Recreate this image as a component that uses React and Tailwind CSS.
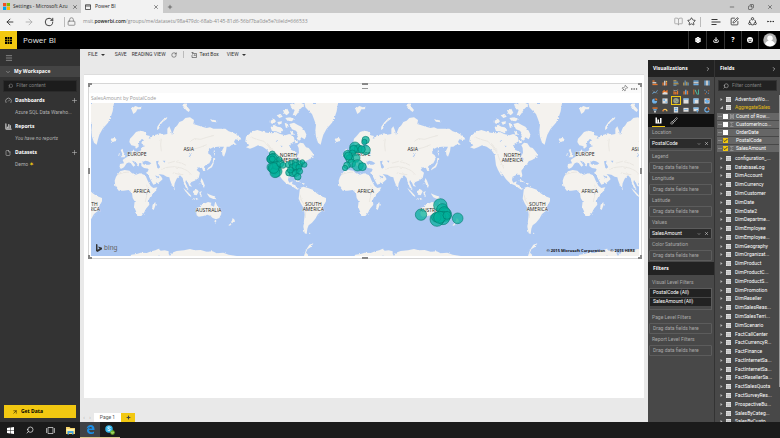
import React from "react";
import {
  ArrowLeft, ArrowRight, RotateCw, Lock, BookOpen, Star, SquarePen, Ellipsis, X, Plus, Minus, Copy,
  Settings, Download, Smile, Menu, ChevronDown, ChevronRight, Search, Gauge, ChartColumn, File,
  ArrowUpRight, Pin, Brush, Check,
} from "lucide-react";

const EURASIA =
  "M148 192L150 182L158 174L168 162L180 158L190 160L198 164L200 172L210 174L206 182L214 180L218 172L228 170L240 166L250 170L262 168L262 152L268 145L274 160L276 172L280 160L284 150L292 142L298 132L308 128L316 120L330 118L342 126L340 138L352 142L366 146L380 150L390 148L400 152L420 152L436 152L446 160L460 164L478 174L484 184L476 186L466 184L462 192L470 200L456 200L448 206L440 206L438 220L432 236L427 230L426 218L432 206L414 206L400 208L388 214L384 226L392 232L396 240L388 256L378 260L372 266L376 278L370 280L366 270L356 268L350 276L360 284L356 300L344 308L334 312L330 318L336 326L328 324L324 314L318 306L316 312L322 326L328 338L320 334L312 318L308 300L300 292L290 302L284 316L282 330L276 322L270 306L268 298L260 296L250 290L236 288L244 296L248 304L236 314L220 320L212 306L204 290L198 284L204 280L206 272L192 270L184 264L184 256L178 254L176 266L170 256L162 250L156 248L166 262L160 266L150 252L140 256L132 268L124 272L118 270L120 258L132 256L128 246L136 240L146 234L150 228L156 224L160 214L164 220L172 222L182 218L186 208L196 204L188 202L184 194L190 184L184 184L176 196L176 206L168 212L164 204L154 202Z";
const AFRICA =
  "M120 280L134 276L148 278L156 286L168 290L180 286L196 292L204 310L212 324L220 330L232 328L226 340L212 354L206 366L208 380L198 392L192 404L184 414L172 414L168 400L162 386L164 370L158 360L156 346L146 336L130 338L116 338L106 324L104 308L108 296Z";
const AUSTRALIA =
  "M348 398L350 390L360 386L368 378L376 376L384 372L394 374L392 382L402 386L406 370L412 384L422 396L424 408L418 420L408 424L398 420L392 414L382 410L370 414L356 416L350 412Z";
const EAST_ISLANDS = [
  "M122 216L128 212L130 222L136 232L134 238L122 238L128 230Z",
  "M117 226L122 228L120 234L115 234Z",
  "M92 184L102 180L109 184L106 190L96 191Z",
  "M154 92L166 84L176 88L186 86L182 94L172 94L168 102L160 108Z",
  "M231 156L232 146L240 134L250 124L262 117L260 123L248 132L240 142L237 152Z",
  "M306 80L316 76L322 86L330 96L326 102L318 96L312 88Z",
  "M390 124L402 126L412 128L410 133L396 131Z",
  "M402 214L405 222L404 234L401 226Z",
  "M400 240L406 240L402 247L401 256L396 268L388 272L380 278L384 270L392 264L398 254Z",
  "M364 300L369 308L374 322L372 330L367 322L362 310Z",
  "M338 340L350 334L356 340L350 352L342 350Z",
  "M310 330L320 338L332 352L334 358L326 352L316 340Z",
  "M334 360L346 362L356 364L346 366Z",
  "M358 342L366 340L362 346L366 354L360 352Z",
  "M380 346L390 350L400 354L410 364L398 362L388 358Z",
  "M402 428L410 428L406 434Z",
  "M458 420L465 427L458 434L450 443L445 442L454 434Z",
  "M226 372L227 380L221 396L216 392L218 380Z",
  "M356 318L362 316L358 322Z",
  "M281 330L285 332L283 337Z",
];
const INLAND_WATER = [
  "M188 252L196 248L204 250L214 256L208 260L194 260L188 258Z",
  "M228 250L236 248L234 256L240 266L238 272L232 270L230 260Z",
  "M248 248L256 248L254 254Z",
  "M198 290L203 292L214 314L210 316Z",
  "M226 292L238 298L236 301L228 297Z",
  "M326 236L334 226L336 228L328 238Z",
  "M196 344L201 344L200 350L196 350Z",
];
const RELIEF = [
  "M244 274L262 268L282 266L304 270L322 278L334 290",
  "M262 256L284 250L306 256L318 262",
  "M276 284L294 288L310 290",
  "M320 220L338 214L360 208L380 200",
  "M330 190L344 182L362 184L380 178L404 172",
  "M244 180L242 200L244 220",
  "M200 320L204 336L200 352L196 372",
  "M112 290L130 284L146 282",
];
const NORTH_AMERICA =
  "M58 190L60 176L70 168L82 160L94 156L106 160L122 164L140 166L150 162L162 168L178 172L190 168L204 178L206 190L196 196L190 208L196 216L210 222L214 234L219 224L218 210L214 202L222 194L232 196L240 208L248 210L256 220L262 228L256 234L264 238L252 242L246 246L236 250L230 260L222 268L214 278L217 292L214 299L209 290L200 290L188 296L186 306L190 314L200 310L198 318L208 322L212 330L220 332L214 335L206 330L194 322L180 316L168 304L160 292L150 278L158 296L152 290L144 276L138 262L136 246L134 230L124 216L110 206L96 202L84 208L72 212L60 208L70 202Z";
const SOUTH_AMERICA =
  "M222 330L232 326L246 330L262 336L272 346L284 354L300 360L300 370L292 384L288 398L276 408L268 422L258 434L248 442L244 452L242 468L236 466L232 446L234 428L236 410L234 392L224 376L218 362L220 346Z";
const GREENLAND =
  "M236 75L336 75L332 100L326 118L318 134L302 152L292 170L288 184L284 200L276 194L270 176L268 158L270 140L264 124L258 108L248 98L238 88Z";
const WEST_ISLANDS = [
  "M134 148L144 140L154 146L164 148L172 156L164 166L150 160L138 160Z",
  "M134 128L144 122L150 130L142 138L135 136Z",
  "M152 112L164 108L170 116L160 120Z",
  "M154 132L168 130L166 138L158 140Z",
  "M172 98L184 92L190 104L182 112L174 106Z",
  "M178 120L192 118L204 122L198 130L184 128Z",
  "M176 136L184 134L188 146L180 150Z",
  "M192 78L208 75L226 75L236 80L222 94L212 110L200 112L206 96L196 90Z",
  "M190 138L204 134L214 140L226 146L236 158L242 172L236 184L226 178L220 188L212 182L218 170L210 158L198 154Z",
  "M192 158L200 162L204 170L196 170Z",
  "M206 186L214 186L216 194L208 196Z",
  "M328 184L338 180L343 184L340 190L331 191Z",
  "M256 226L264 228L263 234L256 232Z",
  "M204 307L214 307L226 314L216 312Z",
  "M228 315L236 316L234 320L228 319Z",
  "M250 500L262 496L256 506L244 514L240 524L250 534L234 534L240 516Z",
  "M246 464L254 466L250 468Z",
];
const ANTARCTICA =
  "M150 536L154 530L170 528L182 524L200 525L214 520L226 517L236 512L242 518L254 517L266 520L266 528L270 534L276 524L290 519L312 517L330 513L344 517L362 516L380 521L398 520L410 526L430 524L446 530L470 534L520 536Z";

const BUBBLES = [
  [22, 228, 9], [18, 243, 13], [26, 242, 16], [22, 243, 15], [22, 243, 9], [20, 268, 14], [30, 272, 17], [34, 280, 17],
  [30, 284, 15], [34, 262, 12], [26, 270, 16], [46, 256, 11], [43, 244, 8], [54, 262, 9], [70, 260, 9], [80, 256, 9],
  [92, 254, 10], [104, 258, 10], [118, 260, 8], [112, 252, 7], [72, 284, 10], [84, 284, 12], [96, 272, 12],
  [82, 268, 10], [92, 264, 11], [102, 268, 9], [92, 286, 10], [76, 276, 9],
  [104, 280, 9], [98, 296, 10], [302, 186, 11], [298, 192, 8], [270, 208, 16], [280, 212, 12],
  [302, 216, 14], [290, 214, 11], [266, 214, 12], [248, 230, 13], [262, 226, 10], [272, 240, 13], [254, 242, 12],
  [250, 234, 12], [260, 256, 12], [246, 262, 10], [240, 270, 8], [278, 262, 17], [292, 266, 12], [468, 410, 17],
  [526, 382, 20], [532, 394, 17], [540, 410, 20], [538, 404, 18], [534, 420, 20], [516, 424, 21], [514, 418, 14],
  [524, 418, 18], [546, 412, 12], [578, 421, 16],
];

const PLACES = [
  ["EUROPE", 171, 234], ["ASIA", 326, 218], ["AFRICA", 185, 344], ["AUSTRALIA", 386, 402],
  ["SOUTH", 700, 384], ["AMERICA", 700, 400], ["NORTH", 625, 237], ["AMERICA", 625, 252],
];

function WorldMap() {
  return (
    <svg className="block h-[153px] w-full bg-[#abc7f2]" viewBox="33 75 1644 459" preserveAspectRatio="xMidYMid slice" role="img" aria-label="SalesAmount by PostalCode">
      <defs>
        <filter id="coast" x="-5%" y="-5%" width="110%" height="110%">
          <feTurbulence type="fractalNoise" baseFrequency="0.12" numOctaves="2" seed="4" />
          <feDisplacementMap in="SourceGraphic" scale="7" xChannelSelector="R" yChannelSelector="G" />
        </filter>
        <g id="world" filter="url(#coast)">
          <g fill="#f4f2ee">
            <path d={EURASIA} /><path d={AFRICA} /><path d={AUSTRALIA} /><path d={ANTARCTICA} />
            {EAST_ISLANDS.map((d) => <path key={d} d={d} />)}
            <g transform="translate(438 0)">
              <path d={NORTH_AMERICA} /><path d={SOUTH_AMERICA} /><path d={GREENLAND} />
              {WEST_ISLANDS.map((d) => <path key={d} d={d} />)}
            </g>
          </g>
          <g fill="#abc7f2">{INLAND_WATER.map((d) => <path key={d} d={d} />)}</g>
          <g fill="none" stroke="#e4e1db" strokeWidth="2">
            {RELIEF.map((d) => <path key={d} d={d} />)}
            <path d="M510 176L530 184L552 190L566 206L580 226L588 248L600 272M562 196L580 220M660 350L664 366L678 390L676 420" />
          </g>
          <path fill="#abc7f2" d="M644 240L654 238L660 244L650 246ZM586 188L592 186L590 192ZM602 202L608 204L604 208Z" />
        </g>
      </defs>
      {[-672, 0, 672, 1344].map((x) => (
        <g key={x} transform={`translate(${x} 0)`}>
          <use href="#world" />
          {PLACES.map(([name, px, py]) => (
            <text key={name + py} x={px} y={py} textAnchor="middle" fontSize="15" fill="#222" stroke="#f4f2ee" strokeWidth="2" paintOrder="stroke" fontFamily="Open Sans, sans-serif" fontWeight="500">{name}</text>
          ))}
        </g>
      ))}
      <g transform="translate(555 0)" fill="#01b09a" fillOpacity="0.72" stroke="#01796b" strokeWidth="1.8">
        {BUBBLES.map(([x, y, r], i) => <circle key={i} cx={x} cy={y} r={r} />)}
      </g>
    </svg>
  );
}

function BrowserChrome() {
  return (
    <>
      <div className="flex h-[13px] shrink-0 items-stretch bg-[#cacaca] font-['Open_Sans',sans-serif] text-[5px] text-[#222]">
        <div className="flex w-[81px] items-center gap-[3px] bg-[#d0d0d0] px-[3px]">
          <svg className="size-[7px] shrink-0" viewBox="0 0 14 14" aria-hidden="true">
            <path fill="#f25022" d="M0 0h6.5v6.5H0z" /><path fill="#7fba00" d="M7.500 0H14v6.500H7.500z" />
            <path fill="#00a4ef" d="M0 7.500h6.500V14H0z" /><path fill="#ffb900" d="M7.500 7.500H14V14H7.500z" />
          </svg>
          <span className="flex-1 whitespace-nowrap">Settings - Microsoft Azu</span>
          <button aria-label="Close tab"><X size={6} /></button>
        </div>
        <div className="flex w-[82px] items-center gap-1 bg-[#f2f2f2] px-1">
          <svg className="size-[6px]" viewBox="0 0 12 12" fill="none" stroke="#333" aria-hidden="true"><path d="M1 1.500h10v9.500H1zM1 4h10" strokeWidth="1.500" /></svg>
          <span className="flex-1">Power BI</span>
          <button aria-label="Close tab"><X size={6} /></button>
        </div>
        <button className="px-1" aria-label="New tab"><Plus size={6} /></button>
        <div className="ml-auto flex items-center gap-[13px] pr-[7px]">
          <button aria-label="Minimise"><Minus size={6} /></button>
          <button aria-label="Restore"><Copy size={6} className="-scale-x-100" /></button>
          <button aria-label="Close"><X size={6} /></button>
        </div>
      </div>
      <div className="flex h-[18px] shrink-0 items-center border-b border-white bg-[#f2f2f2] px-[5px] font-['Open_Sans',sans-serif] text-[5px] text-[#222]">
        <button aria-label="Back"><ArrowLeft size={10} strokeWidth={2} /></button>
        <button className="ml-[9px] text-[#aaa]" aria-label="Forward"><ArrowRight size={10} strokeWidth={2} /></button>
        <button className="ml-[10px]" aria-label="Refresh"><RotateCw size={10} strokeWidth={2} /></button>
        <span className="ml-[10px] h-[10px] w-px bg-[#bbb]" />
        <Lock className="ml-[2px] text-[#777]" size={9} />
        <span className="ml-[7px] flex-1 whitespace-nowrap text-[#8a8a8a]">
          msit.<b className="font-semibold text-[#222]">powerbi.com</b>/groups/me/datasets/98a479dc-68ab-4145-81d6-56bf7ba0de5e?tileId=666533
        </span>
        <button className="text-[#999]" aria-label="Reading view"><BookOpen size={9} /></button>
        <button className="ml-1" aria-label="Favourite"><Star size={9} strokeWidth={2} /></button>
        <span className="ml-1 h-[10px] w-px bg-[#bbb]" />
        <button className="ml-[10px]" aria-label="Hub">
          <svg className="h-[8px] w-[10px]" viewBox="0 0 20 16" fill="none" stroke="currentColor" strokeWidth="1.800"><path d="M1 3h12M1 8h18M1 13h10" /></svg>
        </button>
        <button className="ml-[9px]" aria-label="Web note"><SquarePen size={9} /></button>
        <button className="ml-[9px]" aria-label="Share">
          <svg className="size-[9px]" viewBox="0 0 18 18" fill="none" stroke="currentColor" strokeWidth="1.600"><path d="M5 5.500A6 6 0 0 0 3 11M13 5.500A6 6 0 0 1 15 11M6 15a6 6 0 0 0 6 0" /><circle cx="9" cy="3.500" r="2.300" /><circle cx="3.500" cy="13" r="2.200" /><circle cx="14.500" cy="13" r="2.200" /></svg>
        </button>
        <button className="ml-[9px]" aria-label="More"><Ellipsis size={9} /></button>
      </div>
    </>
  );
}

function AppHeader() {
  return (
    <header className="flex h-[18px] shrink-0 items-stretch bg-black font-['Open_Sans',sans-serif] text-white">
      <button className="flex w-[17px] items-center justify-center bg-[#f2c811]" aria-label="App launcher">
        <svg className="size-[7px]" viewBox="0 0 14 14" aria-hidden="true">
          {[0, 5, 10].map((y) => [0, 5, 10].map((x) => <rect key={`${x}${y}`} x={x} y={y} width="4" height="4" fill="#000" />))}
        </svg>
      </button>
      <h1 className="ml-[6px] flex-1 text-[8px] leading-[18px] text-[#e8e8e8]">Power BI</h1>
      <button className="w-[18px] border-l border-[#333] pl-[6px]" aria-label="Settings"><Settings size={6} strokeWidth={5} /></button>
      <button className="w-[18px] border-l border-[#333] pl-[6px]" aria-label="Download"><Download size={6} strokeWidth={4} /></button>
      <button className="w-[17px] border-l border-[#333] text-[7px] font-bold leading-[16px]" aria-label="Help">?</button>
      <button className="w-[17px] border-l border-[#333] pl-[5px]" aria-label="Feedback">
        <svg className="size-[6px]" viewBox="0 0 12 12" aria-hidden="true"><circle cx="6" cy="6" r="6" fill="#fff" /><path d="M3 4h2v1.500H3zM7 4h2v1.500H7zM2.500 7.500h7C8.500 10 3.500 10 2.500 7.500z" fill="#000" /></svg>
      </button>
      <button className="flex w-[22px] items-center justify-center border-l border-[#333]" aria-label="Account">
        <svg className="size-[14px]" viewBox="0 0 28 28"><circle cx="14" cy="14" r="13.500" fill="#b4b4b4" /><circle cx="14" cy="10.500" r="5.500" fill="#fff" /><path d="M4 22c2-6 6-7 10-7s8 1 10 7a13 13 0 0 1-20 0z" fill="#fff" /></svg>
      </button>
    </header>
  );
}

function NavGroup({ icon, title, add, children }) {
  return (
    <section>
      <div className="flex h-[11px] items-center font-['Open_Sans',sans-serif]">
        <span className="w-[10px] text-[#ccc]">{icon}</span>
        <h2 className="flex-1 font-bold text-white">{title}</h2>
        {add && <button className="text-[#bbb]" aria-label={`Add ${title}`}><Plus size={7} /></button>}
      </div>
      <div className="mb-[3px] h-[12px] whitespace-nowrap pl-[10px] leading-[12px] text-[#b0b0b0]">{children}</div>
    </section>
  );
}

function Sidebar() {
  return (
    <nav className="flex w-[80px] shrink-0 flex-col bg-[#333] text-[5px] text-white">
      <button className="flex h-[17px] items-center pl-[5px] text-[#aaa]" aria-label="Menu"><Menu size={8} /></button>
      <button className="flex h-[11px] items-center gap-[3px] bg-[#444] pl-[5px] font-['Open_Sans',sans-serif] font-bold"><ChevronDown size={6} className="text-[#bbb]" />My Workspace</button>
      <label className="mx-[3px] mt-[3px] flex h-[12px] items-center gap-[3px] border border-[#2a2a2a] bg-[#1c1c1c] pl-1">
        <Search size={6} className="-scale-x-100 text-[#aaa]" />
        <input className="w-full min-w-0 bg-transparent outline-none placeholder:text-[#808080]" placeholder="Filter content" aria-label="Filter content" />
      </label>
      <div className="flex-1 pl-[5px] pr-[2px] pt-[3px]">
        <NavGroup icon={<Gauge size={7} />} title="Dashboards" add><a href="#dashboard">Azure SQL Data Wareho...</a></NavGroup>
        <NavGroup icon={<ChartColumn size={7} strokeWidth={4} />} title="Reports"><em>You have no reports</em></NavGroup>
        <NavGroup icon={<File size={6} />} title="Datasets" add><a href="#demo">Demo <span className="text-[6px] text-[#f2c811]">✶</span></a></NavGroup>
      </div>
      <button className="mx-1 mb-1 flex h-[13px] items-center gap-[3px] bg-[#f2c811] pl-2 font-['Open_Sans',sans-serif] font-bold text-black"><ArrowUpRight size={6} />Get Data</button>
    </nav>
  );
}

function Corner({ place }) {
  return <span className={`absolute size-1 border-[#888] ${place}`} />;
}

function ReportCanvas() {
  return (
    <main className="flex min-w-0 flex-1 flex-col bg-[#e9e9e9]">
      <div className="flex h-[11px] shrink-0 items-center pl-[8px] text-[5px] text-[#333]">
        <button className="flex items-center gap-[3px]">FILE <span className="border-x-2 border-t-2 border-x-transparent border-t-[#333]" /></button>
        <button className="ml-[10px]">SAVE</button>
        <button className="ml-[5px]">READING VIEW</button>
        <button className="ml-[5px]" aria-label="Refresh"><RotateCw size={6} /></button>
        <span className="ml-[6px] h-[7px] w-px bg-[#bbb]" />
        <button className="ml-[7px] flex items-center gap-[3px]">
          <svg className="size-[6px]" viewBox="0 0 12 12" fill="none" stroke="#444" strokeWidth="1.200" aria-hidden="true"><path d="M4 3h7v8H2V6M1 1h4M3 1v4M6 8l1.500-3L9 8" /></svg>Text Box
        </button>
        <button className="ml-[8px] flex items-center gap-[3px]">VIEW <span className="border-x-2 border-t-2 border-x-transparent border-t-[#333]" /></button>
      </div>
      <div className="mx-1 mt-[14px] flex flex-1 flex-col border-t border-[#ddd] bg-white pl-1 pr-[2px] pt-2">
        <section className="relative border border-[#d6d6d6] bg-white">
          <Corner place="-left-px -top-px border-l-2 border-t-2" />
          <Corner place="-right-px -top-px border-r-2 border-t-2" />
          <Corner place="-left-px -bottom-px border-l-2 border-b-2" />
          <Corner place="-right-px -bottom-px border-r-2 border-b-2" />
          <span className="absolute -top-px left-1/2 h-[2px] w-[6px] -translate-x-1/2 bg-[#888]" />
          <span className="absolute left-1/2 top-[3px] h-[2px] w-[6px] -translate-x-1/2 border-b border-[#999]" />
          <span className="absolute -bottom-px left-1/2 h-[2px] w-[6px] -translate-x-1/2 bg-[#888]" />
          <span className="absolute -left-px top-1/2 h-[6px] w-[2px] -translate-y-1/2 bg-[#888]" />
          <span className="absolute -right-px top-1/2 h-[6px] w-[2px] -translate-y-1/2 bg-[#888]" />
          <div className="flex h-[9px] items-center justify-end gap-[2px] bg-[#fafafa] pr-[3px] text-[#555]">
            <button aria-label="Pin visual"><Pin size={7} className="rotate-45" /></button>
            <button aria-label="More options"><Ellipsis size={8} /></button>
          </div>
          <h2 className="h-[10px] pl-[2px] font-['Open_Sans',sans-serif] text-[5px] leading-[11px] text-[#999]">SalesAmount by PostalCode</h2>
          <div className="relative mx-[2px] mb-[2px]">
            <WorldMap />
            <span className="absolute bottom-[3px] left-[5px] flex items-center gap-[2px] text-[7px] leading-[10px] text-[#666]">
              <svg className="h-[8px] w-[6px]" viewBox="0 0 12 16" aria-hidden="true"><path fill="#333" d="M0 0l3 1v10.500L7.500 9 5.500 8 4.500 5 12 7.700v3L3 16l-3-2z" /></svg>bing
            </span>
            <span className="absolute bottom-[1px] right-[4px] flex gap-[5px] whitespace-nowrap font-['Open_Sans',sans-serif] text-[4px] font-bold leading-[8px] text-[#111]"><span>© 2015 Microsoft Corporation</span><span>© 2015 HERE</span></span>
          </div>
        </section>
      </div>
      <div className="mt-[15px] flex h-[9px] shrink-0 items-stretch text-[5px]">
        <div className="flex w-[14px] items-center justify-around px-px text-[#aaa]"><button aria-label="Previous page">‹</button><button aria-label="Next page">›</button></div>
        <button className="w-[27px] bg-white text-[#555]">Page 1</button>
        <button className="flex w-[14px] items-center justify-center bg-[#f2c811] text-[#444]" aria-label="Add page"><Plus size={5} strokeWidth={5} /></button>
      </div>
    </main>
  );
}

const O = "#e8772e", B = "#6fb1e8", W = "#dedede", Y = "#f0c35a";
const VISUALS = [
  ["Stacked bar", [[O, "M1 1h5v3H1z"], [W, "M1 5h9v3H1z"], [O, "M1 9h12v3H1z"]]],
  ["Stacked column", [[O, "M1 6h3v7H1zM9 5h3v8H9z"], [W, "M5 2h3v11H5z"], [Y, "M9 2h3v3H9z"]]],
  ["Clustered bar", [[Y, "M1 1h7v2H1z"], [B, "M1 4h11v2H1z"], [Y, "M1 8h12v2H1z"], [B, "M1 11h7v2H1z"]]],
  ["Clustered column", [[Y, "M1 6h2v7H1zM8 4h2v9H8z"], [B, "M4 1h2v12H4zM11 6h2v7h-2z"]]],
  ["100% bar", [[B, "M1 1h12v3H1zM1 9h12v3H1z"], [W, "M1 5h12v3H1z"]]],
  ["100% column", [[B, "M1 1h3v12H1zM10 1h3v12h-3z"], [W, "M5 1h4v12H5z"]]],
  ["Line", [[B, "M1 10l4-4 3 2 5-6v2L8 10 5 8l-4 4z"], ["#888", "M1 3l5 3 7 4v1L6 7 1 4z"]]],
  ["Area", [[O, "M1 6l4-4 3 3 5-3v8H1z"], [W, "M1 10l5-3 7 2v4H1z"]]],
  ["Line and stacked column", [[O, "M1 5h3v8H1zM5 7h3v6H5zM9 4h3v9H9z"], [W, "M1 2l5 2 6-3v1L6 5 1 3z"]]],
  ["Line and clustered column", [[O, "M1 5h3v8H1zM9 4h3v9H9z"], [B, "M5 2h3v11H5z"]]],
  ["Waterfall", [[O, "M1 1h2v12H1z"], ["#4fbfa2", "M4 2h2l4 9h2V1h2v12H9L5 5z"]]],
  ["Scatter", [[B, "M1 2h2v2H1zM5 6h2v2H5zM9 9h2v2H9z"], [O, "M10 3h2v2h-2zM2 10h2v2H2z"]]],
  ["Pie", [[B, "M6 1a6 6 0 1 0 6 6H6z"], [O, "M8 0a6 6 0 0 1 5 5H8z"]]],
  ["Treemap", [[W, "M1 1h12v12H1z"], [B, "M3 3h4v4H3zM8 8h4v3H8z"]]],
  ["Map", [["#9aa28a", "M7 0a6.500 6.500 0 1 0 0 13A6.500 6.500 0 0 0 7 0z"], ["#555", "M4 4h2v2H4zM8 7h2v2H8z"]]],
  ["Table", [[W, "M1 1h12v12H1z"], [B, "M1 1h12v3H1z"]]],
  ["Matrix", [[W, "M1 1h12v12H1z"], [B, "M1 1h12v3H1zM1 4h3v9H1z"]]],
  ["Filled map", [[W, "M1 1h12v12H1z"], [B, "M2 5l4-3 4 2 3 5-5 3-5-2z"], [O, "M8 2h4v3H8z"]]],
  ["Funnel", [[O, "M1 1h12v3H1z"], [B, "M3 5h8v3H3z"], [W, "M5 9h4v4H5z"]]],
  ["Gauge", [[Y, "M1 10a6 6 0 0 1 12 0h-3a3 3 0 0 0-6 0z"], [O, "M1 10a6 6 0 0 1 3-5l1 3-1 2z"]]],
  ["Multi-row card", [[W, "M2 0h10v13H2z"], [B, "M4 2h6v3H4zM4 7h6v3H4z"]]],
  ["Card", [[W, "M1 2h12v9H1z"], [B, "M3 5h8v2H3z"]]],
  ["Slicer", [[W, "M1 1h12v9H1z"], [B, "M1 1h12v3H1zM7 7h6l-2 3v3H9v-3z"]]],
  ["Donut", [[B, "M7 0a6.500 6.500 0 1 0 6 9l-3-1a3.500 3.500 0 1 1-3-5z"], [O, "M8 0a6 6 0 0 1 5 7h-3a3 3 0 0 0-2-4z"]]],
];

function Well({ label, value, tall }) {
  return (
    <div className="px-px pr-[2px]">
      <h3 className="h-[11px] pl-[3px] leading-[11px] text-[#a8a8a8]">{label}</h3>
      <div className={`rounded-[1px] border border-[#5c5c5c] ${tall ? "h-[13px]" : "h-[11px]"}`}>
        {value ? (
          <div className="flex h-[9px] items-center gap-[3px] bg-[#2b2b2b] pl-[2px] pr-[2px] text-white">
            <span className="flex-1">{value}</span>
            <button aria-label={`${value} options`}><ChevronDown size={4} strokeWidth={2} /></button>
            <button aria-label={`Remove ${value}`}><X size={5} strokeWidth={2} /></button>
          </div>
        ) : <p className="pl-[3px] leading-[9px] text-[#a8a8a8]">Drag data fields here</p>}
      </div>
    </div>
  );
}

function PaneTitle({ children }) {
  return (
    <div className="flex h-[17px] shrink-0 items-center justify-between bg-[#222] pl-[5px] pr-[3px] font-['Open_Sans',sans-serif] text-[5px] text-white">
      <h2 className="font-bold">{children}</h2>
      <button aria-label={`Collapse ${children}`}><ChevronRight size={6} /></button>
    </div>
  );
}

function VisualizationsPane() {
  return (
    <aside className="w-[66px] shrink-0 overflow-hidden bg-[#484848] text-[5px]">
      <PaneTitle>Visualizations</PaneTitle>
      <div className="grid h-[37px] grid-cols-6 content-start gap-y-[2px] pl-[3px] pr-px pt-[2px]">
        {VISUALS.map(([name, parts]) => (
          <button key={name} aria-label={name} className={`flex h-[7px] w-[8px] items-center justify-center ${name === "Map" ? "outline outline-[#f2c811]" : ""}`}>
            <svg className="size-[6px]" viewBox="0 0 14 14">{parts.map(([c, d]) => <path key={c + d} fill={c} d={d} />)}</svg>
          </button>
        ))}
      </div>
      <div className="flex h-[13px] gap-[2px] bg-[#111] pl-1 text-white">
        <button className="flex w-[13px] items-center justify-center border-b border-[#f2c811]" aria-label="Fields">
          <svg className="size-[7px]" viewBox="0 0 14 14" fill="#fff"><path d="M1 1h3v10H1zM5 5h3v6H5zM10 2h3v9h-3zM1 11h12v2H1z" /></svg>
        </button>
        <button className="flex w-[13px] items-center justify-center" aria-label="Format"><Brush size={8} className="text-[#ccc]" strokeWidth={2} /></button>
      </div>
      <Well label="Location" value="PostalCode" tall />
      <Well label="Legend" />
      <Well label="Longitude" />
      <Well label="Latitude" />
      <Well label="Values" value="SalesAmount" />
      <Well label="Color Saturation" />
      <h2 className="mt-px h-[13px] bg-[#222] pl-[5px] font-['Open_Sans',sans-serif] font-bold leading-[13px] text-white">Filters</h2>
      <div className="pb-[2px] pl-px pr-[2px] pt-px">
        <h3 className="h-[12px] pl-[3px] leading-[12px] text-[#a8a8a8]">Visual Level Filters</h3>
        <div className="flex h-[22px] flex-col gap-px border border-[#5c5c5c] text-white">
          <button className="h-[8px] bg-[#222] pl-[3px] text-left">PostalCode (All)</button>
          <button className="h-[8px] bg-[#222] pl-[3px] text-left">SalesAmount (All)</button>
        </div>
      </div>
      <Well label="Page Level Filters" />
      <Well label="Report Level Filters" />
    </aside>
  );
}

const COLUMNS = [
  ["Count of Row...", false, "sum"], ["CustomerInco...", false, "sigma"], ["OrderDate", false, ""], ["PostalCode", true, ""], ["SalesAmount", true, "sigma"],
];
const GLYPHS = { sum: "M1 0h6v10H1zM2 3h4M2 5h4M2 7h4", sigma: "M7 1H1l3 4-3 4h6", "": "" };
const TABLES = [
  "configuration_...", "DatabaseLog", "DimAccount", "DimCurrency", "DimCustomer", "DimDate", "DimDate2", "DimDepartme...",
  "DimEmployee", "DimEmployee...", "DimGeography", "DimOrganizat...", "DimProduct", "DimProductC...", "DimProductS...",
  "DimPromotion", "DimReseller", "DimSalesReas...", "DimSalesTerri...", "DimScenario", "FactCallCenter", "FactCurrencyR...",
  "FactFinance", "FactInternetSa...", "FactInternetSa...", "FactResellerSa...", "FactSalesQuota", "FactSurveyRes...",
  "ProspectiveBu...", "SalesByCateg...", "SalesByCusto...",
];

function TableRow({ name, open }) {
  return (
    <button className="flex min-h-0 w-full flex-1 items-center pl-[5px] text-left">
      <svg className="size-[3px]" viewBox="0 0 6 6" aria-hidden="true"><path fill="#bbb" d={open ? "M6 0v6H0z" : "M1 0l4 3-4 3z"} /></svg>
      <svg className="ml-[3px] size-[5px]" viewBox="0 0 10 10" aria-hidden="true"><path fill="#e2e2e2" d="M0 0h10v10H0z" /><path stroke="#aaa" d="M0 3h10M0 6.500h10M3.500 3v7M6.500 3v7" /></svg>
      <span className={`ml-[4px] whitespace-nowrap ${open ? "text-[#e3bd12]" : "text-white"}`}>{name}</span>
    </button>
  );
}

function FieldsPane() {
  return (
    <aside className="flex w-[66px] shrink-0 flex-col border-l border-[#333] bg-[#484848] text-[5px] text-white">
      <PaneTitle>Fields</PaneTitle>
      <label className="mx-[3px] mt-[3px] flex h-[11px] shrink-0 items-center gap-[3px] border border-[#333] bg-[#222] pl-1">
        <Search size={6} className="shrink-0 -scale-x-100 text-[#ccc]" />
        <input className="w-full min-w-0 bg-transparent outline-none placeholder:text-[#808080]" placeholder="Filter content" aria-label="Filter fields" />
      </label>
      <div className="mt-[4px] flex min-h-0 flex-1 overflow-hidden">
        <div className="flex min-w-0 flex-1 flex-col">
          <div className="flex h-[17px] shrink-0 flex-col"><TableRow name="AdventureWo..." /><TableRow name="AggregateSales" open /></div>
          <div className="ml-[2px] mt-px flex shrink-0 flex-col gap-px">
            {COLUMNS.map(([name, checked, glyph]) => (
              <label key={name} className="flex h-[7px] items-center bg-[#666] pl-px">
                <span className="h-px w-[4px] bg-[#8c8c8c]" />
                <span className="relative ml-px size-[5px]">
                  <input type="checkbox" defaultChecked={checked} className="peer block size-[5px] appearance-none bg-white checked:bg-[#f2c811]" />
                  <Check size={5} strokeWidth={4} className="pointer-events-none absolute inset-0 hidden text-[#222] peer-checked:block" />
                </span>
                <svg className="ml-[2px] h-[5px] w-[4px]" viewBox="0 0 8 10" fill="none" stroke="#bbb" aria-hidden="true"><path d={GLYPHS[glyph]} /></svg>
                <span className="ml-[2px] whitespace-nowrap leading-[7px]">{name}</span>
              </label>
            ))}
          </div>
          <div className="-mb-[4px] mt-[2px] flex min-h-0 flex-1 flex-col leading-[7px]">
            {TABLES.map((name, i) => <TableRow key={i} name={name} />)}
          </div>
        </div>
        <span className="mb-[35px] w-px bg-[#999]" />
      </div>
    </aside>
  );
}

function Taskbar() {
  const item = "flex w-[20px] items-center justify-center";
  return (
    <footer className="flex h-[16px] shrink-0 bg-[#1b1b1b] text-white">
      <button className={item} aria-label="Start"><svg className="size-[7px]" viewBox="0 0 14 14" fill="#fff"><path d="M0 2l6-1v6H0zM7 1l7-1v7H7zM0 8h6v5l-6-1zM7 8h7v6l-7-1z" /></svg></button>
      <button className={item} aria-label="Search"><Search size={8} className="-scale-x-100" /></button>
      <button className={item} aria-label="Task view"><svg className="h-[7px] w-[9px]" viewBox="0 0 18 14" fill="none" stroke="#ddd" strokeWidth="1.500"><path d="M4 1h10v12H4zM2 3H.8v8H2M16 3h1.200v8H16" /></svg></button>
      <button className={item} aria-label="File Explorer"><svg className="size-[9px]" viewBox="0 0 18 18"><path fill="#f6d46b" d="M0 2h7l2 2h9v12H0z" /><path fill="#fff0a8" d="M1 6h16v5H1z" /><path fill="#4aa6e0" d="M3 10h12v7h-3v-3H6v3H3z" /></svg></button>
      <button className={`${item} border-b border-[#d9c48a] bg-[#3f4246]`} aria-label="Edge"><svg className="size-[9px]" viewBox="0 0 18 18"><path fill="#1b8de4" d="M1 8C2 3 5 0 9.500 0 15 0 17.500 4 17 10H6c.3 5 6 6 10 3v3.500C10 20 2 18 2 11c0-3 2-5 4.500-6C4 5 2 6 1 8zm5-1h6c0-4-5.500-4-6 0z" /></svg></button>
      <button className={`${item} border-b border-[#d9c48a]`} aria-label="Skype"><svg className="size-[10px]" viewBox="0 0 20 20"><circle cx="8" cy="8" r="7.500" fill="#35b6ea" /><path d="M11 5C8 3 5 4 5.500 6s5 1.500 5 3.500S7 12 5 10" fill="none" stroke="#fff" strokeWidth="1.800" /><circle cx="15" cy="15" r="4.500" fill="#76b82a" /><path d="M13 15l1.500 1.500L17 14" fill="none" stroke="#fff" strokeWidth="1.200" /></svg></button>
    </footer>
  );
}

export default function App() {
  return (
    <div className="flex h-screen flex-col overflow-hidden bg-[#e9e9e9] font-[Roboto,sans-serif]">
      <BrowserChrome />
      <AppHeader />
      <div className="flex min-h-0 flex-1">
        <Sidebar />
        <ReportCanvas />
        <div className="flex shrink-0 border-t-[11px] border-[#e9e9e9]">
          <VisualizationsPane />
          <FieldsPane />
        </div>
      </div>
      <Taskbar />
    </div>
  );
}
